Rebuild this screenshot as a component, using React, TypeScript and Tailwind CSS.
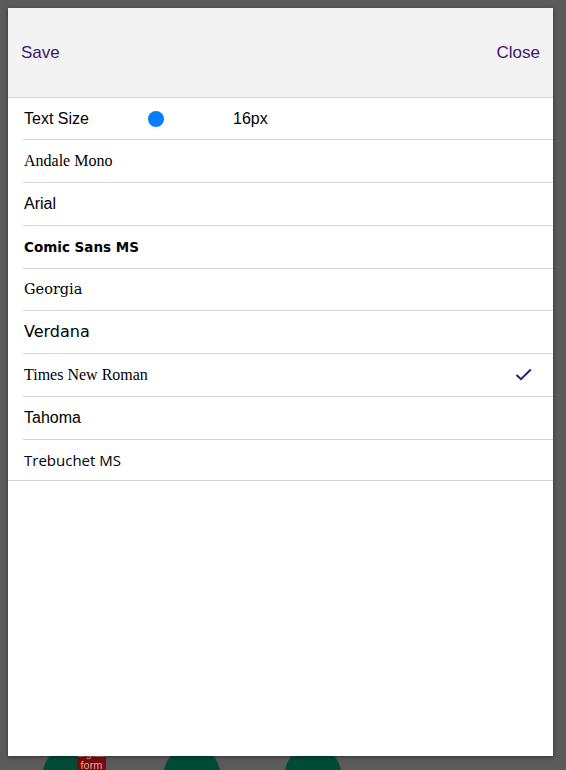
import React from "react";

const fonts: { name: string; cls: string }[] = [
  { name: "Andale Mono", cls: "font-['Liberation_Serif',serif] text-[16px]" },
  { name: "Arial", cls: "font-['Liberation_Sans',sans-serif] text-[16px]" },
  { name: "Comic Sans MS", cls: "font-['DejaVu_Sans',sans-serif] text-[13.5px] font-bold" },
  { name: "Georgia", cls: "font-['DejaVu_Serif',serif] text-[14.5px]" },
  { name: "Verdana", cls: "font-['DejaVu_Sans',sans-serif] text-[16px]" },
  { name: "Times New Roman", cls: "font-['Liberation_Serif',serif] text-[16px]" },
  { name: "Tahoma", cls: "font-['Liberation_Sans',sans-serif] text-[16px]" },
  { name: "Trebuchet MS", cls: "font-['Open_Sans',sans-serif] text-[15px]" },
];

export default function App() {
  return (
    <div className="relative h-[770px] w-[566px] overflow-hidden bg-[#5a5a5a] font-['Liberation_Sans',sans-serif]">
      {/* background page content */}
      <div className="absolute left-[43px] top-[746px] h-[56px] w-[56px] rounded-full bg-[#004b37]" />
      <div className="absolute left-[164px] top-[746px] h-[56px] w-[56px] rounded-full bg-[#004b37]" />
      <div className="absolute left-[285px] top-[746px] h-[56px] w-[56px] rounded-full bg-[#004b37]" />
      <div className="absolute left-[77px] top-[745px] flex h-[40px] w-[29px] flex-col items-center bg-[#7a0a0a] pt-[2px] text-[11px] leading-[12px] text-[#d9a9a9]">
        <span>digital</span>
        <span>form</span>
      </div>

      {/* modal */}
      <div className="absolute left-[8px] top-[8px] flex h-[748px] w-[545px] flex-col bg-white shadow-[0_1px_4px_rgba(0,0,0,0.45)]">
        <div className="flex h-[90px] items-center justify-between border-b border-[#d6d6d6] bg-[#f3f3f3] pl-[13px] pr-[13px] text-[17px] text-[#3a1670]">
          <span>Save</span>
          <span>Close</span>
        </div>
        <ul className="border-b border-[#d6d6d6]">
          <li className="ml-[15px] flex h-[42px] items-center border-b border-[#d6d6d6] pl-[1px] text-[16px] text-black">
            <span className="w-[124px]">Text Size</span>
            <span className="h-[16px] w-[16px] rounded-full bg-[#0a7bff]" />
            <span className="ml-[69px]">16px</span>
          </li>
          {fonts.map((f, i) => (
            <li
              key={f.name}
              className={
                i === fonts.length - 1
                  ? "ml-[15px] flex h-[40px] items-center pl-[1px] pr-[21px] text-black"
                  : "ml-[15px] flex h-[42.86px] items-center border-b border-[#d6d6d6] pl-[1px] pr-[21px] text-black"
              }
            >
              <span className={"flex-1 " + f.cls}>{f.name}</span>
              {f.name === "Times New Roman" && (
                <svg width="17" height="13" viewBox="0 0 17 13" className="mb-[1px]">
                  <path d="M1.5 7 L6 11.2 L15.8 1.5" fill="none" stroke="#2e1a6e" strokeWidth="2" />
                </svg>
              )}
            </li>
          ))}
        </ul>
      </div>
    </div>
  );
}
